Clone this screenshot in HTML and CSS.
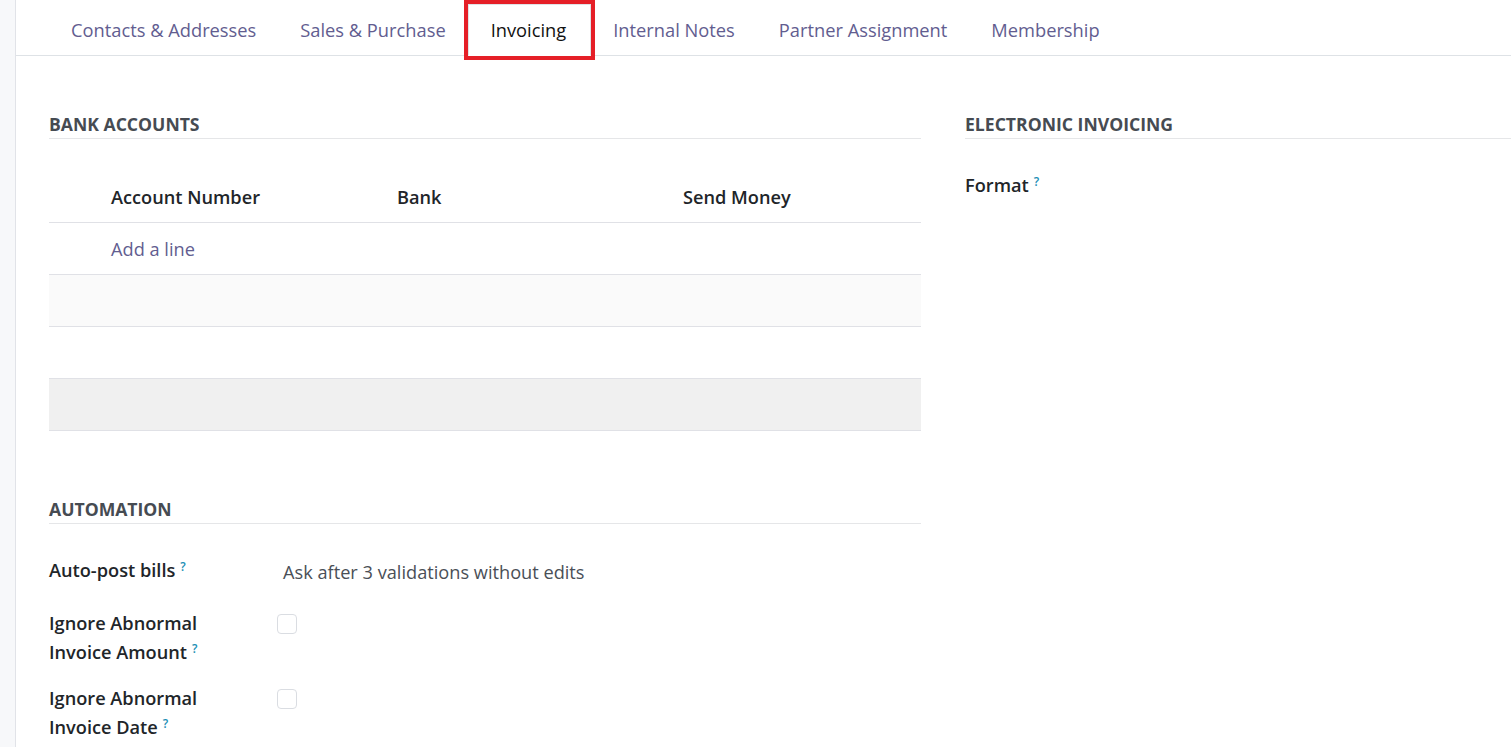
FILE: index.html
```html
<!DOCTYPE html>
<html lang="en">
<head>
  <meta charset="UTF-8">
  <meta name="viewport" content="width=device-width, initial-scale=1.0">
  <title>Partner - Invoicing</title>
  <link rel="stylesheet" href="styles.css">
</head>
<body>
  <aside class="gutter"></aside>
  <main class="sheet">
    <nav class="tabs">
      <a class="tab">Contacts &amp; Addresses</a>
      <a class="tab">Sales &amp; Purchase</a>
      <a class="tab active">Invoicing</a>
      <a class="tab">Internal Notes</a>
      <a class="tab">Partner Assignment</a>
      <a class="tab">Membership</a>
    </nav>

    <div class="content">
      <div class="columns">
        <section class="group">
          <h3 class="group-title">Bank Accounts</h3>
          <div class="list">
            <div class="list-row list-head">
              <span class="handle"></span>
              <span class="cell">Account Number</span>
              <span class="cell">Bank</span>
              <span class="cell">Send Money</span>
            </div>
            <div class="list-row">
              <span class="handle"></span>
              <span class="cell add-line">Add a line</span>
            </div>
            <div class="list-row light"></div>
            <div class="list-row"></div>
            <div class="list-row grey"></div>
          </div>
        </section>

        <section class="group">
          <h3 class="group-title">Electronic Invoicing</h3>
          <div class="fields">
            <div class="field">
              <label class="field-label">Format<sup class="help">?</sup></label>
              <div class="field-value"></div>
            </div>
          </div>
        </section>
      </div>

      <section class="group automation">
        <h3 class="group-title">Automation</h3>
        <div class="fields">
          <div class="field">
            <label class="field-label">Auto-post bills<sup class="help">?</sup></label>
            <div class="field-value select">Ask after 3 validations without edits</div>
          </div>
          <div class="field">
            <label class="field-label">Ignore Abnormal<br>Invoice Amount<sup class="help">?</sup></label>
            <div class="field-value"><span class="checkbox"></span></div>
          </div>
          <div class="field">
            <label class="field-label">Ignore Abnormal<br>Invoice Date<sup class="help">?</sup></label>
            <div class="field-value"><span class="checkbox"></span></div>
          </div>
        </div>
      </section>
    </div>
  </main>
</body>
</html>
```

FILE: styles.css
```css
body {
  font-family: "Open Sans", "Noto Sans", Arial, sans-serif;
  font-size: 18.2px;
  margin: 0;
  padding: 0;
  display: flex;
  min-height: 100vh;
  background-color: #fff;
  color: #212529;
  overflow: hidden;
}
.gutter {
  width: 15px;
  flex: none;
  background-color: #f7f8fa;
  border-right: 1px solid #e1e3e8;
}
.sheet {
  flex: 1;
  min-width: 0;
}

/* tabs */
.tabs {
  display: flex;
  padding: 4px 0 0 33px;
  border-bottom: 1px solid #dee2e6;
}
.tab {
  padding: 1px 22px 0;
  font-size: 18.3px;
  line-height: 50px;
  color: #625d90;
  cursor: pointer;
  white-space: nowrap;
}
.tab.active {
  color: #111;
  background: #fff;
  border: 1px solid #dee2e6;
  border-bottom-color: #fff;
  margin-bottom: -1px;
  padding: 0 24px 0 22px;
  outline: 4px solid #e51f27;
}

/* content */
.content {
  padding: 56px 0 0 33px;
}
.columns {
  display: grid;
  grid-template-columns: 872px 1fr;
  gap: 44px;
}
.group-title {
  margin: 0;
  font-size: 17.6px;
  font-weight: 700;
  line-height: 25px;
  padding-bottom: 1px;
  text-transform: uppercase;
  color: #464b52;
  border-bottom: 1px solid #e5e6e8;
}

/* one2many list */
.list {
  margin-top: 32px;
}
.list-row {
  display: grid;
  grid-template-columns: 54px 286px 286px 1fr;
  height: 51px;
  align-items: center;
  border-bottom: 1px solid #e0e1e6;
}
.list-head {
  font-weight: 600;
  color: #212529;
}
.cell {
  padding: 0 8px;
}
.add-line {
  color: #625d90;
}
.list-row.light {
  background-color: #fafafa;
}
.list-row.grey {
  background-color: #f0f0f0;
}

/* form fields */
.automation {
  width: 872px;
  margin-top: 66px;
}
.fields {
  margin-top: 32px;
  display: flex;
  flex-direction: column;
  gap: 17px;
}
.field {
  display: flex;
  align-items: flex-start;
}
.field-label {
  width: 228px;
  flex: none;
  font-weight: 600;
  line-height: 29px;
  color: #212529;
  padding-right: 30px;
  box-sizing: border-box;
}
.help {
  font-size: 12px;
  font-weight: 600;
  color: #1b8fb5;
  margin-left: 5px;
  vertical-align: 6px;
  line-height: 1;
}
.field-value {
  flex: 1;
}
.field-value.select {
  height: 36px;
  line-height: 33px;
  padding-left: 6px;
  color: #4a4f57;
}
.checkbox {
  display: block;
  width: 18px;
  height: 18px;
  margin-top: 5px;
  border: 1px solid #dadde2;
  border-radius: 4px;
}
```
